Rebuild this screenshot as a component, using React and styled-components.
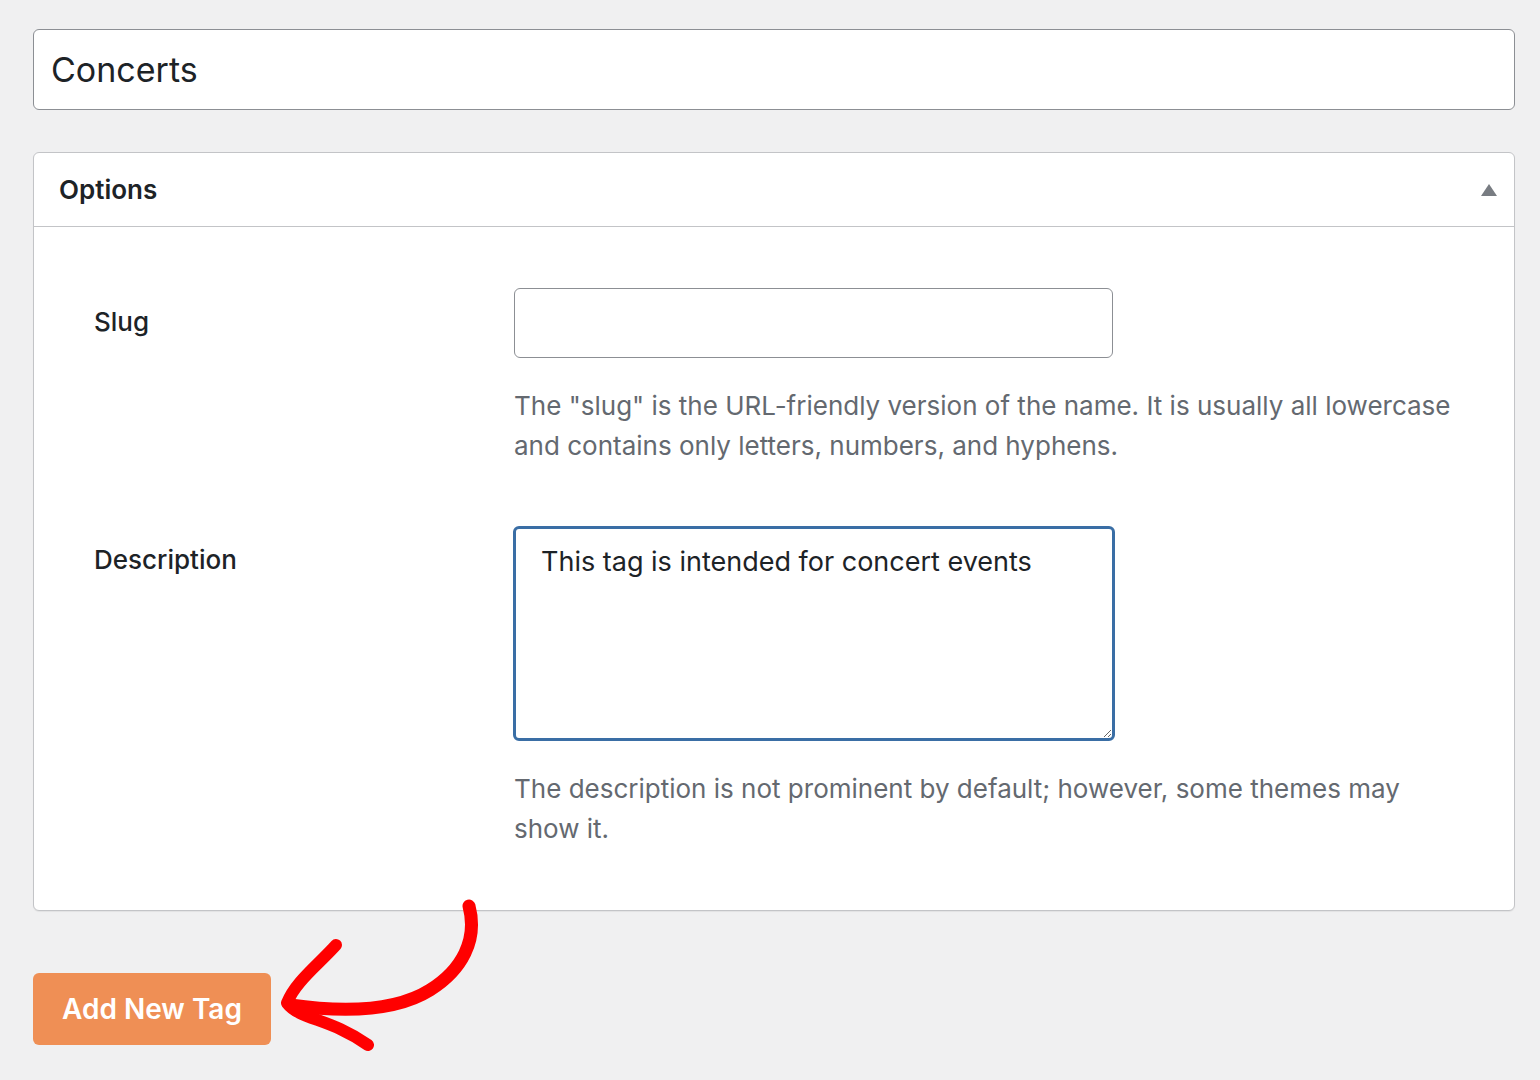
import React from "react";
import styled, { createGlobalStyle } from "styled-components";

const Global = createGlobalStyle`
  html, body { margin: 0; background: #f0f0f1; }
  body { font-family: Inter, "Noto Sans", sans-serif; color: #1d2327; }
  * { box-sizing: border-box; }
`;
const Page = styled.div`
  position: relative; width: 1540px; height: 1080px;
  padding: 29px 25px 0 33px;
`;
const NameInput = styled.input`
  display: block; width: 1482px; height: 81px;
  border: 1.5px solid #8c8f94; border-radius: 6px; background: #fff;
  padding: 0 17px; font: 400 34px Inter, "Noto Sans", sans-serif; color: #1d2327;
  outline: none;
`;
const Panel = styled.div`
  margin-top: 42px; width: 1482px; background: #fff;
  border: 1.5px solid #c3c4c7; border-radius: 6px;
  box-shadow: 0 1px 1px rgba(0,0,0,0.06);
`;
const Header = styled.div`
  height: 74px; display: flex; align-items: center; justify-content: space-between;
  padding: 0 17px 0 25px; border-bottom: 1.5px solid #c3c4c7;
`;
const Title = styled.h2`
  margin: 0; font-size: 26px; font-weight: 600; color: #1d2327;
`;
const Triangle = styled.div`
  width: 0; height: 0; border-left: 8px solid transparent; border-right: 8px solid transparent;
  border-bottom: 12px solid #787c82;
`;
const Body = styled.div`
  padding: 61px 60px 61px 60px;
  display: grid; grid-template-columns: 420px 600px; row-gap: 60px;
`;
const Label = styled.label`
  font-size: 26px; font-weight: 500; color: #1d2327; padding-top: ${p => p.$pt}px;
`;
const Field = styled.div``;
const TextInput = styled.input`
  display: block; width: 599px; height: 70px; border: 1.5px solid #8c8f94;
  border-radius: 6px; outline: none; background: #fff;
`;
const TextArea = styled.textarea`
  display: block; width: 602px; height: 215px; margin-left: -1px;
  border: 3px solid #3a6ea5; border-radius: 6px; outline: none;
  padding: 16px 25px; font: 400 27px Inter, "Noto Sans", sans-serif; color: #1d2327;
  resize: vertical;
`;
const Help = styled.p`
  margin: 28px 0 0; width: 950px; font-size: 26px; line-height: 40px; color: #646970;
`;
const Button = styled.button`
  margin-top: 62px; width: 238px; height: 72px; border: none; border-radius: 6px;
  background: #ef8f55; color: #fff; font: 600 28px Inter, "Noto Sans", sans-serif;
`;
const Arrow = styled.svg`
  position: absolute; left: 260px; top: 890px; pointer-events: none;
`;

export default function App() {
  return (
    <Page>
      <Global />
      <NameInput defaultValue="Concerts" />
      <Panel>
        <Header><Title>Options</Title><Triangle /></Header>
        <Body>
          <Label $pt={18}>Slug</Label>
          <Field>
            <TextInput />
            <Help>The "slug" is the URL-friendly version of the name. It is usually all lowercase and contains only letters, numbers, and hyphens.</Help>
          </Field>
          <Label $pt={18}>Description</Label>
          <Field>
            <TextArea defaultValue="This tag is intended for concert events" />
            <Help>The description is not prominent by default; however, some themes may show it.</Help>
          </Field>
        </Body>
      </Panel>
      <Button>Add New Tag</Button>
      <Arrow width="240" height="180" viewBox="260 890 240 180">
        <path d="M469 906 C478 940 462 970 430 990 C395 1012 340 1012 290 1005"
          fill="none" stroke="#f00" strokeWidth="13" strokeLinecap="round" />
        <path d="M336 945 C318 965 295 982 287 1003 C300 1020 330 1018 368 1045"
          fill="none" stroke="#f00" strokeWidth="12" strokeLinecap="round" strokeLinejoin="round" />
      </Arrow>
    </Page>
  );
}
